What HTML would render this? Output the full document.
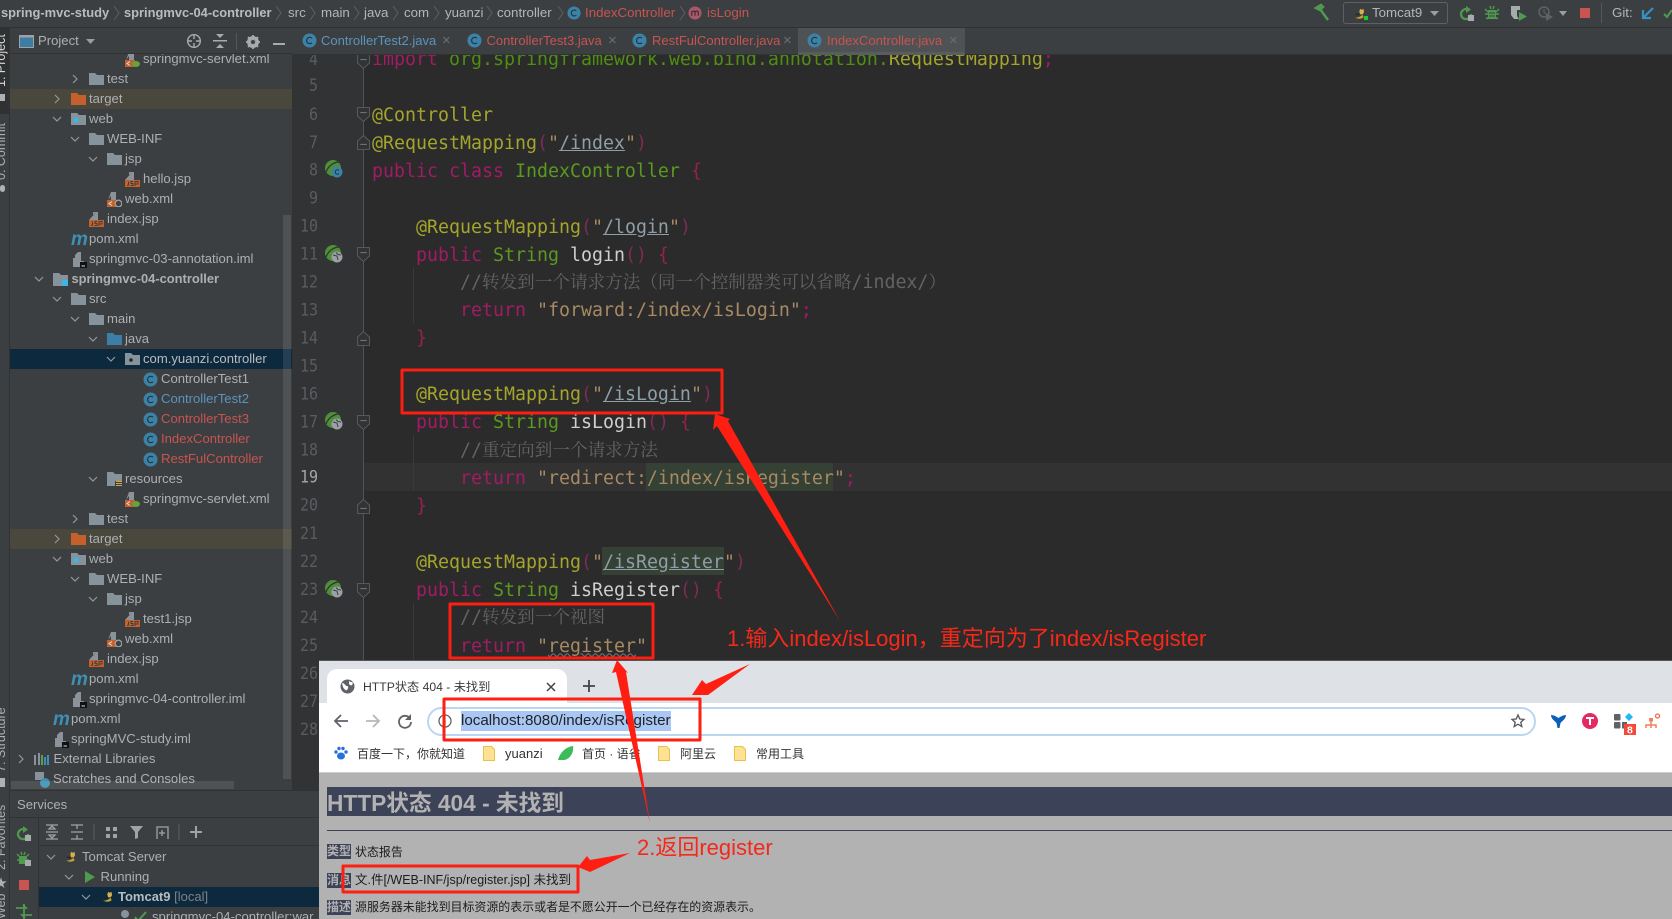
<!DOCTYPE html>
<html lang="zh"><head><meta charset="utf-8"><title>IntelliJ IDEA</title>
<style>
*{margin:0;padding:0;box-sizing:border-box}
html,body{width:1672px;height:919px;overflow:hidden;background:#2b2b2b}
body{position:relative;font-family:"Liberation Sans","Noto Sans CJK SC",sans-serif}
.a{position:absolute}
.ab{position:absolute;white-space:pre}
svg{position:absolute;overflow:visible}
/* top */
#top{left:0;top:0;width:1672px;height:28px;background:#3c3f41;border-bottom:1px solid #323232}
.bc{position:absolute;top:4px;height:18px;line-height:18px;font-size:13.3px;color:#b3b6b8;white-space:pre}
.bc.bd{font-weight:bold;color:#b9bcbe;font-size:12.9px}
.red{color:#c75450}
#tabs{left:292px;top:28px;width:1380px;height:26px;background:#3c3f41}
.tb{position:absolute;top:32px;height:18px;line-height:18px;font-size:13.05px;white-space:pre}
.x{position:absolute;top:32px;height:18px;line-height:18px;font-size:15px;color:#6c6f71}
/* tree */
#tree{left:0;top:0;width:1672px;height:919px;clip-path:inset(54px 1380px 129px 10px)}
.r{position:absolute;left:0;width:292px;height:20px}
.r span{position:absolute;top:0;line-height:20px;font-size:13.1px;color:#adb0b3;white-space:pre}
.r svg{top:3px}
.r b{font-weight:bold;font-size:12.9px}
/* code */
#code{left:372px;top:46px;font-family:"DejaVu Sans Mono","Noto Serif CJK SC",monospace;font-size:18.27px;color:#c8c8c8}
#code div{height:27.95px;line-height:27.95px;white-space:pre;overflow:visible}
#code div.c{position:relative;top:-1.5px}
#code i{font-style:normal;font-family:"Noto Serif CJK SC",serif;font-size:17.6px}
.k{color:#a31a65}.g{color:#5a9a20}.n{color:#a5a52c}.s{color:#a78a63}.u{color:#8e9fa8;text-decoration:underline}
.p{color:#7e2b55}.br{color:#96204f}.c{color:#636363}.w{color:#cfcfcf}.o{color:#4e8f12}
.wv{text-decoration:underline wavy #777 1px}
.ln{position:absolute;left:292px;width:26px;text-align:right;height:28px;line-height:28px;font:15px/28px "DejaVu Sans Mono",monospace;color:#5a5d60;transform:scaleY(1.15)}
/* browser */
#br{left:319px;top:660px;width:1353px;height:259px;background:#dee1e6;overflow:hidden;border-top:1px solid #555}
.bm{position:absolute;top:84px;height:18px;line-height:18px;font-size:12px;color:#333;white-space:pre}
.lab{position:absolute;left:8px;width:24px;height:15px;line-height:15px;background:#3c4257;color:#b2b2b2;font-size:12px;font-weight:bold;white-space:pre}
.txt{position:absolute;left:36px;height:16px;line-height:16px;font-size:11.95px;color:#1c1c1c;white-space:pre}
</style></head><body>
<svg width="0" height="0" style="position:absolute">
<defs>
<symbol id="fo" viewBox="0 0 15 14"><path d="M0 1h6l2 2h7v10H0z" fill="#87939b"/></symbol>
<symbol id="fr" viewBox="0 0 15 14"><path d="M0 1h6l2 2h7v10H0z" fill="#c4602c"/></symbol>
<symbol id="fj" viewBox="0 0 15 14"><path d="M0 1h6l2 2h7v10H0z" fill="#3c7fa6"/></symbol>
<symbol id="fw" viewBox="0 0 15 14"><path d="M0 1h6l2 2h7v10H0z" fill="#87939b"/><circle cx="5" cy="8" r="2.6" fill="#3fb4e6"/></symbol>
<symbol id="fp" viewBox="0 0 15 14"><path d="M0 1h6l2 2h7v10H0z" fill="#87939b"/><circle cx="6" cy="8" r="1.8" fill="#24282b"/></symbol>
<symbol id="fy" viewBox="0 0 15 14"><path d="M0 0h6l2 2h7v7H8v5H0z" fill="#87939b"/><path d="M9 9h6v1H9zM9 11h6v1H9zM9 13h6v1H9z" fill="#d9a343"/></symbol>
<symbol id="fm" viewBox="0 0 15 14"><path d="M0 1h6l2 2h7v5H9v6H0z" fill="#87939b"/><rect x="9" y="8" width="6" height="6" fill="#3fb4e6"/></symbol>
<symbol id="jsp" viewBox="0 0 15 15"><path d="M4 0h5v8H4zM0 8h4V4l3-4" fill="#8b9299"/><rect y="8" width="15" height="7" fill="#c4602c"/><path d="M3.5 9.5v3.5l-1.5.5M8 9.500H6v2h2v2H5.500M10 14V9.500h3v2.500h-3" stroke="#3c3f41" fill="none" stroke-width="1"/></symbol>
<symbol id="xl" viewBox="0 0 15 15"><path d="M4 0h5v8H4zM1 8l3-4V0" fill="#8b9299"/><rect y="8" width="10" height="7" fill="#c4602c"/><path d="M5 9.500l-3 2 3 2" stroke="#ddd" fill="none"/><ellipse cx="11" cy="12" rx="4" ry="3" fill="#63a53b"/></symbol>
<symbol id="xw" viewBox="0 0 15 15"><path d="M4 0h5v8H4zM1 8l3-4V0" fill="#8b9299"/><rect y="8" width="10" height="7" fill="#c4602c"/><path d="M5 9.500l-3 2 3 2" stroke="#ddd" fill="none"/><circle cx="11.500" cy="11.500" r="3.300" fill="#3c3f41" stroke="#9aa0a5" stroke-width="1.300"/></symbol>
<symbol id="cl" viewBox="0 0 15 15"><circle cx="7.500" cy="7.500" r="7" fill="#3c82a6"/><path d="M10 5.200a3.200 3.200 0 1 0 0 4.600" stroke="#23343f" fill="none" stroke-width="1.200"/></symbol>
<symbol id="ml" viewBox="0 0 15 15"><circle cx="7.500" cy="7.500" r="7" fill="#a8586a"/><path d="M4 10.500V5.500M4 6.500c1-1.500 3.500-1.500 3.500 0v4M7.500 6.500c1-1.500 3.500-1.500 3.500 0v4" stroke="#2f2a2c" fill="none" stroke-width="1.100"/></symbol>
<symbol id="iml" viewBox="0 0 15 16"><path d="M3 3l3-3h3v9h3v6H1V6h2z" fill="#8b9299"/><rect x="8" y="10" width="7" height="6" fill="#111"/><rect x="9.500" y="13.500" width="3.500" height="1" fill="#ddd"/></symbol>
<symbol id="cd" viewBox="0 0 10 10"><path d="M1 3l4 4 4-4" stroke="#95989b" stroke-width="1.200" fill="none"/></symbol>
<symbol id="cr" viewBox="0 0 10 10"><path d="M3 1l4 4-4 4" stroke="#95989b" stroke-width="1.200" fill="none"/></symbol>
<symbol id="sc" viewBox="0 0 8 14"><path d="M1 0l5 7-5 7" stroke="#5d6063" stroke-width="1" fill="none"/></symbol>
<symbol id="bean" viewBox="0 0 18 18"><circle cx="8" cy="8" r="8" fill="#4f8f3a"/><path d="M1 12C4 4 11 2 14 2" stroke="#2f3133" stroke-width="1.200" fill="none"/><circle cx="12" cy="12" r="5.500" fill="#3c82a6"/><path d="M14 10.500a2.200 2.200 0 1 0 0 3" stroke="#23343f" fill="none"/></symbol>
<symbol id="beanw" viewBox="0 0 18 18"><circle cx="8" cy="8" r="8" fill="#4f8f3a"/><path d="M1 12C4 4 11 2 14 2" stroke="#2f3133" stroke-width="1.200" fill="none"/><circle cx="12" cy="12" r="5.500" fill="#9ba1a6"/><path d="M8 10l4 1 1 4M11 7.500l2 2 3 .5" stroke="#3c3f41" fill="none"/></symbol>
<symbol id="fd" viewBox="0 0 14 16"><path d="M.5.500h13v9L7 15.500.5 9.500z" fill="#313335" stroke="#5a5d60"/><path d="M3.500 6h7" stroke="#7a7d80"/></symbol>
<symbol id="fu" viewBox="0 0 14 16"><path d="M.5 15.500h13v-9L7 .500.5 6.500z" fill="#313335" stroke="#5a5d60"/><path d="M3.500 10h7" stroke="#7a7d80"/></symbol>
<symbol id="tc" viewBox="0 0 16 14"><path d="M7 1l2 1 2-1 .5 4-1.500 2.500-3 0L6 4z" fill="#d8b04a"/><path d="M1 11c3 1 6-1 9-3l1 3c-3 2-7 2-10 0z" fill="#c7a136"/><path d="M2 7l4 1" stroke="#222" stroke-width="1.500"/></symbol>
</defs></svg>

<!-- editor background -->
<div class="a" style="left:292px;top:54px;width:72px;height:740px;background:#313335"></div>
<div class="a" style="left:363px;top:54px;width:1px;height:610px;background:#515355"></div>
<div class="a" style="left:364px;top:463px;width:1308px;height:28px;background:#323232"></div>
<div class="a" style="left:646px;top:463px;width:187px;height:28px;background:#344134"></div>
<div class="a" style="left:602px;top:547px;width:122px;height:28px;background:#344134"></div>
<div class="a" style="left:413px;top:267px;width:1px;height:56px;background:#3a3a3a"></div>
<div class="a" style="left:413px;top:435px;width:1px;height:56px;background:#3a3a3a"></div>
<div class="a" style="left:413px;top:603px;width:1px;height:57px;background:#3a3a3a"></div>

<!-- code -->
<div class="a" id="code">
<div><span class="k">import</span> <span class="o">org.springframework.web.bind.annotation.</span><span class="n">RequestMapping</span><span class="k">;</span></div>
<div> </div>
<div><span class="n">@Controller</span></div>
<div><span class="n">@RequestMapping</span><span class="p">(</span><span class="s">"</span><span class="u">/index</span><span class="s">"</span><span class="p">)</span></div>
<div><span class="k">public class</span> <span class="g">IndexController</span> <span class="br">{</span></div>
<div> </div>
<div>    <span class="n">@RequestMapping</span><span class="p">(</span><span class="s">"</span><span class="u">/login</span><span class="s">"</span><span class="p">)</span></div>
<div>    <span class="k">public</span> <span class="g">String</span> <span class="w">login</span><span class="p">()</span> <span class="br">{</span></div>
<div class="c">        //<i>转发到一个请求方法（同一个控制器类可以省略</i>/index/<i>）</i></div>
<div>        <span class="k">return</span> <span class="s">"forward:/index/isLogin"</span><span class="k">;</span></div>
<div>    <span class="br">}</span></div>
<div> </div>
<div>    <span class="n">@RequestMapping</span><span class="p">(</span><span class="s">"</span><span class="u">/isLogin</span><span class="s">"</span><span class="p">)</span></div>
<div>    <span class="k">public</span> <span class="g">String</span> <span class="w">isLogin</span><span class="p">()</span> <span class="br">{</span></div>
<div class="c">        //<i>重定向到一个请求方法</i></div>
<div>        <span class="k">return</span> <span class="s">"redirect:/index/isRegister"</span><span class="k">;</span></div>
<div>    <span class="br">}</span></div>
<div> </div>
<div>    <span class="n">@RequestMapping</span><span class="p">(</span><span class="s">"</span><span class="u">/isRegister</span><span class="s">"</span><span class="p">)</span></div>
<div>    <span class="k">public</span> <span class="g">String</span> <span class="w">isRegister</span><span class="p">()</span> <span class="br">{</span></div>
<div class="c">        //<i>转发到一个视图</i></div>
<div>        <span class="k">return</span> <span class="s">"<span class="wv">register</span>"</span></div>
</div>

<!-- line numbers -->
<div class="ln" style="top:45px">4</div><div class="ln" style="top:71px">5</div><div class="ln" style="top:100px">6</div><div class="ln" style="top:128px">7</div><div class="ln" style="top:156px">8</div><div class="ln" style="top:184px">9</div><div class="ln" style="top:212px">10</div><div class="ln" style="top:240px">11</div><div class="ln" style="top:268px">12</div><div class="ln" style="top:296px">13</div><div class="ln" style="top:324px">14</div><div class="ln" style="top:352px">15</div><div class="ln" style="top:380px">16</div><div class="ln" style="top:408px">17</div><div class="ln" style="top:436px">18</div><div class="ln" style="top:463px;color:#a4a6a8">19</div><div class="ln" style="top:491px">20</div><div class="ln" style="top:519px">21</div><div class="ln" style="top:547px">22</div><div class="ln" style="top:575px">23</div><div class="ln" style="top:603px">24</div><div class="ln" style="top:631px">25</div><div class="ln" style="top:659px">26</div><div class="ln" style="top:687px">27</div><div class="ln" style="top:715px">28</div>

<!-- gutter icons -->
<svg width="18" height="18" style="left:325px;top:160px"><use href="#bean"/></svg>
<svg width="18" height="18" style="left:325px;top:245px"><use href="#beanw"/></svg>
<svg width="18" height="18" style="left:325px;top:412px"><use href="#beanw"/></svg>
<svg width="18" height="18" style="left:325px;top:580px"><use href="#beanw"/></svg>
<svg width="13" height="15" style="left:357px;top:54px"><use href="#fd"/></svg>
<svg width="13" height="15" style="left:357px;top:107px"><use href="#fd"/></svg>
<svg width="13" height="15" style="left:357px;top:135px"><use href="#fu"/></svg>
<svg width="13" height="15" style="left:357px;top:247px"><use href="#fd"/></svg>
<svg width="13" height="15" style="left:357px;top:331px"><use href="#fu"/></svg>
<svg width="13" height="15" style="left:357px;top:415px"><use href="#fd"/></svg>
<svg width="13" height="15" style="left:357px;top:499px"><use href="#fu"/></svg>
<svg width="13" height="15" style="left:357px;top:583px"><use href="#fd"/></svg>

<!-- project panel -->
<div class="a" style="left:10px;top:28px;width:282px;height:762px;background:#3c3f41"></div>
<div class="a" style="left:292px;top:28px;width:1px;height:762px;background:#323232"></div>
<div class="a" style="left:10px;top:89px;width:282px;height:20px;background:#4a473d"></div>
<div class="a" style="left:10px;top:349px;width:282px;height:20px;background:#0d293e"></div>
<div class="a" style="left:10px;top:529px;width:282px;height:20px;background:#4a473d"></div>

<div class="a" id="tree">
<div class="r" style="top:49px"><svg width="15" height="15" style="left:125px"><use href="#xl"/></svg><span style="left:143px">springmvc-servlet.xml</span></div>
<div class="r" style="top:69px"><svg width="10" height="10" style="left:70px;top:5px"><use href="#cr"/></svg><svg width="15" height="14" style="left:89px"><use href="#fo"/></svg><span style="left:107px">test</span></div>
<div class="r" style="top:89px"><svg width="10" height="10" style="left:52px;top:5px"><use href="#cr"/></svg><svg width="15" height="14" style="left:71px"><use href="#fr"/></svg><span style="left:89px">target</span></div>
<div class="r" style="top:109px"><svg width="10" height="10" style="left:52px;top:5px"><use href="#cd"/></svg><svg width="15" height="14" style="left:71px"><use href="#fw"/></svg><span style="left:89px">web</span></div>
<div class="r" style="top:129px"><svg width="10" height="10" style="left:70px;top:5px"><use href="#cd"/></svg><svg width="15" height="14" style="left:89px"><use href="#fo"/></svg><span style="left:107px">WEB-INF</span></div>
<div class="r" style="top:149px"><svg width="10" height="10" style="left:88px;top:5px"><use href="#cd"/></svg><svg width="15" height="14" style="left:107px"><use href="#fo"/></svg><span style="left:125px">jsp</span></div>
<div class="r" style="top:169px"><svg width="15" height="15" style="left:125px"><use href="#jsp"/></svg><span style="left:143px">hello.jsp</span></div>
<div class="r" style="top:189px"><svg width="15" height="15" style="left:107px"><use href="#xw"/></svg><span style="left:125px">web.xml</span></div>
<div class="r" style="top:209px"><svg width="15" height="15" style="left:89px"><use href="#jsp"/></svg><span style="left:107px">index.jsp</span></div>
<div class="r" style="top:229px"><svg width="16" height="15" style="left:71px"><text x="0" y="13" font-family="Liberation Sans" font-weight="bold" font-style="italic" font-size="19" fill="#3d8fb3">m</text></svg><span style="left:89px">pom.xml</span></div>
<div class="r" style="top:249px"><svg width="15" height="16" style="left:72px"><use href="#iml"/></svg><span style="left:89px">springmvc-03-annotation.iml</span></div>
<div class="r" style="top:269px"><svg width="10" height="10" style="left:34px;top:5px"><use href="#cd"/></svg><svg width="15" height="14" style="left:53px"><use href="#fm"/></svg><span style="left:71.500px"><b>springmvc-04-controller</b></span></div>
<div class="r" style="top:289px"><svg width="10" height="10" style="left:52px;top:5px"><use href="#cd"/></svg><svg width="15" height="14" style="left:71px"><use href="#fo"/></svg><span style="left:89px">src</span></div>
<div class="r" style="top:309px"><svg width="10" height="10" style="left:70px;top:5px"><use href="#cd"/></svg><svg width="15" height="14" style="left:89px"><use href="#fo"/></svg><span style="left:107px">main</span></div>
<div class="r" style="top:329px"><svg width="10" height="10" style="left:88px;top:5px"><use href="#cd"/></svg><svg width="15" height="14" style="left:107px"><use href="#fj"/></svg><span style="left:125px">java</span></div>
<div class="r" style="top:349px"><svg width="10" height="10" style="left:106px;top:5px"><use href="#cd"/></svg><svg width="15" height="14" style="left:125px"><use href="#fp"/></svg><span style="left:143px;color:#b9bcbe">com.yuanzi.controller</span></div>
<div class="r" style="top:369px"><svg width="15" height="15" style="left:143px"><use href="#cl"/></svg><span style="left:161px">ControllerTest1</span></div>
<div class="r" style="top:389px"><svg width="15" height="15" style="left:143px"><use href="#cl"/></svg><span style="left:161px;color:#5b93bd">ControllerTest2</span></div>
<div class="r" style="top:409px"><svg width="15" height="15" style="left:143px"><use href="#cl"/></svg><span style="left:161px;color:#c75450">ControllerTest3</span></div>
<div class="r" style="top:429px"><svg width="15" height="15" style="left:143px"><use href="#cl"/></svg><span style="left:161px;color:#c75450">IndexController</span></div>
<div class="r" style="top:449px"><svg width="15" height="15" style="left:143px"><use href="#cl"/></svg><span style="left:161px;color:#c75450">RestFulController</span></div>
<div class="r" style="top:469px"><svg width="10" height="10" style="left:88px;top:5px"><use href="#cd"/></svg><svg width="15" height="14" style="left:107px"><use href="#fy"/></svg><span style="left:125px">resources</span></div>
<div class="r" style="top:489px"><svg width="15" height="15" style="left:125px"><use href="#xl"/></svg><span style="left:143px">springmvc-servlet.xml</span></div>
<div class="r" style="top:509px"><svg width="10" height="10" style="left:70px;top:5px"><use href="#cr"/></svg><svg width="15" height="14" style="left:89px"><use href="#fo"/></svg><span style="left:107px">test</span></div>
<div class="r" style="top:529px"><svg width="10" height="10" style="left:52px;top:5px"><use href="#cr"/></svg><svg width="15" height="14" style="left:71px"><use href="#fr"/></svg><span style="left:89px">target</span></div>
<div class="r" style="top:549px"><svg width="10" height="10" style="left:52px;top:5px"><use href="#cd"/></svg><svg width="15" height="14" style="left:71px"><use href="#fw"/></svg><span style="left:89px">web</span></div>
<div class="r" style="top:569px"><svg width="10" height="10" style="left:70px;top:5px"><use href="#cd"/></svg><svg width="15" height="14" style="left:89px"><use href="#fo"/></svg><span style="left:107px">WEB-INF</span></div>
<div class="r" style="top:589px"><svg width="10" height="10" style="left:88px;top:5px"><use href="#cd"/></svg><svg width="15" height="14" style="left:107px"><use href="#fo"/></svg><span style="left:125px">jsp</span></div>
<div class="r" style="top:609px"><svg width="15" height="15" style="left:125px"><use href="#jsp"/></svg><span style="left:143px">test1.jsp</span></div>
<div class="r" style="top:629px"><svg width="15" height="15" style="left:107px"><use href="#xw"/></svg><span style="left:125px">web.xml</span></div>
<div class="r" style="top:649px"><svg width="15" height="15" style="left:89px"><use href="#jsp"/></svg><span style="left:107px">index.jsp</span></div>
<div class="r" style="top:669px"><svg width="16" height="15" style="left:71px"><text x="0" y="13" font-family="Liberation Sans" font-weight="bold" font-style="italic" font-size="19" fill="#3d8fb3">m</text></svg><span style="left:89px">pom.xml</span></div>
<div class="r" style="top:689px"><svg width="15" height="16" style="left:72px"><use href="#iml"/></svg><span style="left:89px">springmvc-04-controller.iml</span></div>
<div class="r" style="top:709px"><svg width="16" height="15" style="left:53px"><text x="0" y="13" font-family="Liberation Sans" font-weight="bold" font-style="italic" font-size="19" fill="#3d8fb3">m</text></svg><span style="left:71px">pom.xml</span></div>
<div class="r" style="top:729px"><svg width="15" height="16" style="left:54px"><use href="#iml"/></svg><span style="left:71px">springMVC-study.iml</span></div>
<div class="r" style="top:749px"><svg width="10" height="10" style="left:16px;top:5px"><use href="#cr"/></svg><svg width="14" height="12" style="left:35px;top:4px"><path d="M0 2v10M4 0v12" stroke="#87939b" stroke-width="2"/><path d="M7 2v10" stroke="#5f9d4d" stroke-width="2"/><path d="M10 4v8M13 2v10" stroke="#3d8fb3" stroke-width="2"/></svg><span style="left:53.500px">External Libraries</span></div>
<div class="r" style="top:769px"><svg width="16" height="16" style="left:35px"><rect width="9" height="8" fill="#87939b"/><circle cx="10" cy="11" r="5" fill="#3d8fb3"/></svg><span style="left:53px">Scratches and Consoles</span></div>
</div>
<div class="a" style="left:283px;top:215px;width:8px;height:564px;background:rgba(255,255,255,.1)"></div>
<div class="a" style="left:11px;top:781px;width:223px;height:8px;background:rgba(255,255,255,.1)"></div>

<!-- left strip -->
<div class="a" style="left:0;top:0;width:10px;height:919px;background:#3c3f41;overflow:hidden;border-right:1px solid #323232">
<div class="a" style="left:0;top:28px;width:10px;height:86px;background:#2f3133"></div>
<div class="ab" style="left:-6px;top:87px;font-size:12.500px;line-height:14px;color:#d8d8d8;transform-origin:0 0;transform:rotate(-90deg)">1: Project</div>
<div class="a" style="left:0;top:94px;width:5px;height:7px;background:#aeb0b2"></div>
<div class="ab" style="left:-6px;top:180px;font-size:12.500px;line-height:14px;color:#adb0b3;transform-origin:0 0;transform:rotate(-90deg)">0: Commit</div>
<div class="a" style="left:0;top:185px;width:5px;height:7px;background:#aeb0b2;border-radius:3px"></div>
<div class="ab" style="left:-6px;top:772px;font-size:12.500px;line-height:14px;color:#adb0b3;transform-origin:0 0;transform:rotate(-90deg)">7: Structure</div>
<div class="a" style="left:0;top:778px;width:5px;height:9px;background:#aeb0b2"></div>
<div class="ab" style="left:-6px;top:870px;font-size:12.500px;line-height:14px;color:#adb0b3;transform-origin:0 0;transform:rotate(-90deg)">2: Favorites</div>
<div class="ab" style="left:-5px;top:874px;font-size:12px;color:#aeb0b2">★</div>
<div class="ab" style="left:-6px;top:919px;font-size:12.500px;line-height:14px;color:#adb0b3;transform-origin:0 0;transform:rotate(-90deg)">Web</div>
</div>

<!-- services -->
<div class="a" style="left:10px;top:790px;width:309px;height:129px;background:#3c3f41;border-top:1px solid #323232"></div>
<div class="a" style="left:10px;top:817px;width:309px;height:1px;background:#323232"></div>
<div class="a" style="left:38px;top:845px;width:281px;height:1px;background:#323232"></div>
<div class="a" style="left:38px;top:818px;width:1px;height:101px;background:#323232"></div>
<div class="ab" style="left:17px;top:796px;font-size:13.100px;line-height:18px;color:#adb0b3">Services</div>
<svg width="16" height="16" style="left:16px;top:826px"><path d="M12 8a5 5 0 1 1-3-4.500" stroke="#4f9a4f" stroke-width="2.200" fill="none"/><path d="M7 0l5 3.500-5 3.500z" fill="#4f9a4f"/><rect x="9" y="9" width="6" height="6" fill="#a8abad"/></svg>
<svg width="16" height="16" style="left:16px;top:851px"><path d="M3 5h8v8H3z" fill="#4f9a4f"/><path d="M1 3l3 3M13 3l-3 3M1 9h3M10 9h3M5 1l1 3M9 1l-1 3" stroke="#4f9a4f" stroke-width="1.400"/><rect x="9" y="9" width="6" height="6" fill="#a8abad"/></svg>
<div class="a" style="left:19px;top:880px;width:10px;height:10px;background:#c75450"></div>
<svg width="16" height="16" style="left:16px;top:904px"><path d="M8 0v16M0 4h10l-3-3M16 11H6l3 3" stroke="#4f9a4f" stroke-width="1.800" fill="none"/></svg>
<svg width="200" height="16" style="left:45px;top:824px" fill="none" stroke="#a0a3a5" stroke-width="1.300"><path d="M1 1h12M1 15h12M1 8h12M7 2l-3 3h6zM7 14l-3-3h6z"/><path d="M26 1h12M26 15h12M26 8h12M32 1v4M32 11v4"/><path d="M49 0v16M134 0v16" stroke="#55585a"/><path d="M61 3h4v4h-4zM68 3h4v4h-4zM61 10h4v4h-4zM68 10h4v4h-4z" fill="#a0a3a5" stroke="none"/><path d="M85 2h13l-5 6v6l-3 1V8z" fill="#a0a3a5" stroke="none"/><path d="M112 15V3h11v12M117 6v6M114 9h6"/><path d="M151 2v12M145 8h12" stroke-width="2"/></svg>
<div class="a" style="left:39px;top:887px;width:280px;height:20px;background:#0d293e"></div>
<svg width="10" height="10" style="left:46px;top:852px"><use href="#cd"/></svg>
<svg width="14" height="12" style="left:65px;top:851px"><use href="#tc"/></svg>
<div class="ab" style="left:82px;top:848px;font-size:13.100px;line-height:18px;color:#adb0b3">Tomcat Server</div>
<svg width="10" height="10" style="left:64px;top:872px"><use href="#cd"/></svg>
<svg width="12" height="12" style="left:84px;top:871px"><path d="M1 0l10 6-10 6z" fill="#4f9a4f"/></svg>
<div class="ab" style="left:100.500px;top:868px;font-size:13.100px;line-height:18px;color:#adb0b3">Running</div>
<svg width="10" height="10" style="left:81px;top:892px"><use href="#cd"/></svg>
<svg width="14" height="12" style="left:102px;top:891px"><use href="#tc"/></svg>
<div class="ab" style="left:118px;top:888px;font-size:13px;line-height:18px;color:#b9bcbe"><b>Tomcat9</b> <span style="color:#7f8385">[local]</span></div>
<div class="a" style="left:118px;top:909px;width:201px;height:10px;overflow:hidden"><svg width="14" height="12" style="left:0;top:0"><circle cx="7" cy="5" r="4" fill="#87939b"/></svg><svg width="14" height="12" style="left:16px;top:2px"><path d="M1 6l3 4 8-9" stroke="#4f9a4f" stroke-width="2" fill="none"/></svg><div class="ab" style="left:34px;top:-1px;font-size:13.100px;line-height:18px;color:#adb0b3">springmvc-04-controller:war</div></div>

<!-- tab bar -->
<div class="a" id="tabs"></div>
<div class="a" style="left:292px;top:54px;width:1380px;height:1px;background:#323232"></div>
<div class="a" style="left:798px;top:28px;width:167px;height:27px;background:#4e5254;border-bottom:3px solid #5a5d5f"></div>
<svg width="15" height="15" style="left:302px;top:33px"><use href="#cl"/></svg><div class="tb" style="left:321px;color:#5b93bd">ControllerTest2.java</div><div class="x" style="left:442px">×</div>
<svg width="15" height="15" style="left:467px;top:33px"><use href="#cl"/></svg><div class="tb red" style="left:486.500px">ControllerTest3.java</div><div class="x" style="left:608px">×</div>
<svg width="15" height="15" style="left:632px;top:33px"><use href="#cl"/></svg><div class="tb red" style="left:652px">RestFulController.java</div><div class="x" style="left:783px">×</div>
<svg width="15" height="15" style="left:807px;top:33px"><use href="#cl"/></svg><div class="tb red" style="left:827px">IndexController.java</div><div class="x" style="left:949px">×</div>

<!-- project header -->
<div class="a" style="left:10px;top:28px;width:282px;height:26px;background:#3c3f41;border-bottom:1px solid #323232"></div>
<svg width="15" height="13" style="left:18.500px;top:35px"><rect x=".5" y=".5" width="14" height="12" fill="#3d7da3" stroke="#a0a3a5"/><rect x=".5" y=".5" width="14" height="2" fill="#a0a3a5"/></svg>
<div class="ab" style="left:38px;top:32px;font-size:13.100px;line-height:18px;color:#adb0b3">Project</div>
<svg width="10" height="6" style="left:86px;top:39px"><path d="M0 0h9l-4.500 5z" fill="#9a9da0"/></svg>
<svg width="16" height="16" style="left:186px;top:33px" fill="none" stroke="#a8abad" stroke-width="1.400"><circle cx="8" cy="8" r="6.300"/><path d="M8 1v5M8 10v5M1 8h5M10 8h5"/></svg>
<svg width="14" height="14" style="left:213px;top:34px" fill="#a8abad"><rect y="6" width="14" height="1.500"/><path d="M3 0h8l-4 4zM3 14h8l-4-4z"/></svg>
<div class="a" style="left:236px;top:33px;width:1px;height:17px;background:#55585a"></div>
<svg width="14" height="14" style="left:246px;top:35px"><circle cx="7" cy="7" r="4.500" fill="none" stroke="#a8abad" stroke-width="3"/><path d="M7 0v14M0 7h14M2 2l10 10M12 2L2 12" stroke="#a8abad" stroke-width="1.800"/><circle cx="7" cy="7" r="2" fill="#3c3f41"/></svg>
<div class="a" style="left:273px;top:43px;width:12px;height:2px;background:#a8abad"></div>

<!-- top bar -->
<div class="a" id="top"></div>
<div class="bc bd" style="left:1px">spring-mvc-study</div>
<svg width="8" height="14" style="left:113px;top:6px"><use href="#sc"/></svg>
<div class="bc bd" style="left:124px">springmvc-04-controller</div>
<svg width="8" height="14" style="left:275px;top:6px"><use href="#sc"/></svg>
<div class="bc" style="left:288px">src</div>
<svg width="8" height="14" style="left:309px;top:6px"><use href="#sc"/></svg>
<div class="bc" style="left:321px">main</div>
<svg width="8" height="14" style="left:353px;top:6px"><use href="#sc"/></svg>
<div class="bc" style="left:364px">java</div>
<svg width="8" height="14" style="left:392px;top:6px"><use href="#sc"/></svg>
<div class="bc" style="left:404px">com</div>
<svg width="8" height="14" style="left:433px;top:6px"><use href="#sc"/></svg>
<div class="bc" style="left:445px">yuanzi</div>
<svg width="8" height="14" style="left:486px;top:6px"><use href="#sc"/></svg>
<div class="bc" style="left:497px">controller</div>
<svg width="8" height="14" style="left:557px;top:6px"><use href="#sc"/></svg>
<svg width="14" height="14" style="left:567px;top:6px"><use href="#cl"/></svg>
<div class="bc red" style="left:585px">IndexController</div>
<svg width="8" height="14" style="left:679px;top:6px"><use href="#sc"/></svg>
<svg width="14" height="14" style="left:688px;top:6px"><use href="#ml"/></svg>
<div class="bc red" style="left:707px">isLogin</div>

<svg width="16" height="16" style="left:1315px;top:5px"><path d="M1 3l5-3 2 2-3 3zM5 4l8 11" stroke="#4f9a4f" stroke-width="2.500" fill="#4f9a4f"/></svg>
<div class="a" style="left:1343px;top:2px;width:105px;height:22px;border:1px solid #5e6163;border-radius:3px"></div>
<svg width="14" height="12" style="left:1354px;top:8px"><use href="#tc"/></svg>
<div class="a" style="left:1364px;top:16px;width:4px;height:4px;background:#1ecb2e"></div>
<div class="bc" style="left:1372px">Tomcat9</div>
<svg width="9" height="6" style="left:1430px;top:11px"><path d="M0 0h9L4.500 5z" fill="#9a9da0"/></svg>
<svg width="16" height="16" style="left:1459px;top:6px"><path d="M12 8a5 5 0 1 1-3-4.500" stroke="#4f9a4f" stroke-width="2.200" fill="none"/><path d="M7 0l5 3.500-5 3.500z" fill="#4f9a4f"/><rect x="9" y="9" width="6" height="6" fill="#a8abad"/></svg>
<svg width="14" height="14" style="left:1485px;top:6px"><path d="M3 4h8v9H3z" fill="#4f9a4f"/><path d="M0 3l3 3M14 3l-3 3M0 8h3M11 8h3M1 13l3-2M13 13l-3-2M5 0l1 3M9 0l-1 3" stroke="#4f9a4f" stroke-width="1.400"/><path d="M4 7h6M4 10h6" stroke="#3c3f41"/></svg>
<svg width="16" height="16" style="left:1511px;top:6px"><path d="M0 0h9v4H6v6l2 3H3L0 9z" fill="#a8abad"/><path d="M8 6l8 4.500L8 15z" fill="#4f9a4f"/></svg>
<svg width="15" height="15" style="left:1538px;top:6px"><circle cx="6" cy="6" r="5" fill="none" stroke="#5f6163" stroke-width="1.500"/><path d="M6 3v3l2 2" stroke="#5f6163" fill="none"/><path d="M8 7l7 4-7 4z" fill="#5f6163"/></svg>
<svg width="8" height="5" style="left:1559px;top:11px"><path d="M0 0h8L4 5z" fill="#9a9da0"/></svg>
<div class="a" style="left:1580px;top:8px;width:10px;height:10px;background:#c75450"></div>
<div class="a" style="left:1601px;top:3px;width:1px;height:20px;background:#55585a"></div>
<div class="bc" style="left:1612px">Git:</div>
<svg width="12" height="12" style="left:1642px;top:7px"><path d="M11 1L2 10M1 3v8h8" stroke="#3592c4" stroke-width="2.200" fill="none"/></svg>
<svg width="10" height="10" style="left:1664px;top:9px"><path d="M0 5l3 3 5-7" stroke="#4f9a4f" stroke-width="2" fill="none"/></svg>

<!-- browser -->
<div class="a" id="br">
<div class="a" style="left:8px;top:8px;width:240px;height:36px;background:#fff;border-radius:10px 10px 0 0"></div>
<div class="a" style="left:0;top:42px;width:1353px;height:69px;background:#fff"></div>
<svg width="15" height="15" style="left:21px;top:18px"><circle cx="7.500" cy="7.500" r="7" fill="#5f6368"/><path d="M2 4c3 0 3 3 5 3s1 3 0 4-3-1-4-3zM9 1c0 2 2 2 3 2s1 2 0 3-2 0-3-1z" fill="#fff"/></svg>
<div class="ab" style="left:44px;top:16px;font-size:12.200px;line-height:20px;color:#3a3a3a">HTTP状态 404 - 未找到</div>
<svg width="10" height="10" style="left:227px;top:21px"><path d="M1 1l8 8M9 1L1 9" stroke="#444" stroke-width="1.500"/></svg>
<svg width="12" height="12" style="left:264px;top:19px"><path d="M6 0v12M0 6h12" stroke="#444" stroke-width="1.800"/></svg>
<svg width="14" height="14" style="left:15px;top:53px"><path d="M14 7H2M7 1L1 7l6 6" stroke="#5f6368" stroke-width="1.800" fill="none"/></svg>
<svg width="14" height="14" style="left:47px;top:53px"><path d="M0 7h12M7 1l6 6-6 6" stroke="#b5b8bb" stroke-width="1.800" fill="none"/></svg>
<svg width="14" height="14" style="left:79px;top:53px"><path d="M12 4.500A6 6 0 1 0 13 8" stroke="#5f6368" stroke-width="1.800" fill="none"/><path d="M13 0v6H7z" fill="#5f6368"/></svg>
<div class="a" style="left:108px;top:46px;width:1109px;height:29px;border:2px solid #b9d6f4;border-radius:15px;background:#fff"></div>
<svg width="14" height="14" style="left:119px;top:53px"><circle cx="7" cy="7" r="6" fill="none" stroke="#5f6368" stroke-width="1.300"/><path d="M7 6v4.500M7 3.500v1.300" stroke="#5f6368" stroke-width="1.300"/></svg>
<div class="a" style="left:142px;top:50px;width:210px;height:20px;background:#a8c7f5"></div>
<div class="ab" style="left:142px;top:50px;font-size:15.150px;line-height:20px;color:#222">localhost:8080/index/isRegister</div>
<svg width="14" height="14" style="left:1192px;top:53px"><path d="M7 1l1.800 4 4.200.4-3.200 2.800 1 4.300L7 10.200 3.200 12.500l1-4.300L1 5.400 5.200 5z" fill="none" stroke="#555" stroke-width="1.300"/></svg>
<svg width="15" height="14" style="left:1232px;top:53px"><path d="M0 1c3 0 6 2 7.500 3C9 3 12 1 15 1c0 4-4 6-5.500 8L8.500 14h-2L5.500 9C4 7 0 5 0 1z" fill="#0c5fb8"/></svg>
<svg width="16" height="16" style="left:1263px;top:52px"><circle cx="8" cy="8" r="8" fill="#e42a63"/><path d="M4 5h8M8 5v7" stroke="#fff" stroke-width="2"/></svg>
<svg width="22" height="22" style="left:1295px;top:52px"><rect width="6.500" height="6.500" y="1" rx="1" fill="#5f6368"/><rect width="6.500" height="6.500" y="9" rx="1" fill="#5f6368"/><rect x="8" y="9" width="5" height="6.500" fill="#5f6368"/><path d="M11 4l4-4 4 4-4 4z" fill="#22b8f5"/><rect x="10" y="11" width="12" height="11" fill="#f24a3d"/><text x="13" y="20.500" font-size="10.500" font-family="Liberation Sans" font-weight="bold" fill="#fff">8</text></svg>
<svg width="16" height="17" style="left:1326px;top:52px"><circle cx="12.500" cy="3" r="2" fill="none" stroke="#f46b45" stroke-width="1.300"/><rect x="4" y="5" width="4" height="3.500" fill="#f08060"/><path d="M6 8.500v2M1 15v-3h10v3M6 10v5" stroke="#f08060" stroke-width="1.500" fill="none"/></svg>

<svg width="14" height="14" style="left:15px;top:85px" fill="#2a6fe0"><ellipse cx="7" cy="10" rx="4" ry="3.500"/><circle cx="2" cy="6" r="1.700"/><circle cx="5" cy="2.500" r="1.700"/><circle cx="9" cy="2.500" r="1.700"/><circle cx="12" cy="6" r="1.700"/></svg>
<div class="bm" style="left:38px">百度一下，你就知道</div>
<svg width="12" height="15" style="left:164px;top:85px"><path d="M.5.500h8l3 3v11H.5z" fill="#fde293" stroke="#eac14e"/></svg>
<div class="bm" style="left:186px;font-size:13px">yuanzi</div>
<svg width="16" height="15" style="left:239px;top:85px"><path d="M0 14C2 6 8 1 15 0c1 5-2 13-9 14-2 0-4 0-6 0z" fill="#3cbb5a"/></svg>
<div class="bm" style="left:263px">首页 · 语雀</div>
<svg width="12" height="15" style="left:339px;top:85px"><path d="M.5.500h8l3 3v11H.5z" fill="#fde293" stroke="#eac14e"/></svg>
<div class="bm" style="left:361px">阿里云</div>
<svg width="12" height="15" style="left:415px;top:85px"><path d="M.5.500h8l3 3v11H.5z" fill="#fde293" stroke="#eac14e"/></svg>
<div class="bm" style="left:437px">常用工具</div>

<div class="a" style="left:0;top:111px;width:1353px;height:148px;background:#b2b2b2;border-top:1px solid #cfcfcf"></div>
<div class="a" style="left:8px;top:126px;width:1345px;height:29px;background:#3c4257"></div>
<div class="ab" style="left:8px;top:128px;font-size:22.700px;font-weight:bold;line-height:29px;color:#b2b2b2;height:27px;overflow:hidden">HTTP状态 404 - 未找到</div>
<div class="a" style="left:8px;top:169px;width:1345px;height:1px;background:#3c4257"></div>
<div class="lab" style="top:183px">类型</div><div class="txt" style="top:183px">状态报告</div>
<div class="lab" style="top:212px">消息</div><div class="txt" style="top:211px;font-size:12.500px">文.件[/WEB-INF/jsp/register.jsp] 未找到</div>
<div class="lab" style="top:239px">描述</div><div class="txt" style="top:238px">源服务器未能找到目标资源的表示或者是不愿公开一个已经存在的资源表示。</div>
</div>

<!-- annotations -->
<svg width="1672" height="919" style="left:0;top:0">
<g fill="none" stroke="#fe1f12" stroke-width="3" stroke-linejoin="round">
<rect x="402" y="370" width="320" height="43"/>
<rect x="450" y="604" width="203" height="54"/>
<rect x="444" y="699" width="256" height="41"/>
<rect x="343" y="866" width="235" height="26"/>
</g>
<g fill="#fe1f12">
<path d="M840 621L728 421 730 419 715 414 713 430 717 426z"/>
<path d="M750 664L708 695 692 695 702 680 706 684z"/>
<path d="M650 823L626 672 628 673 617 660 612 673 616 672z"/>
<path d="M630 853L590 872 578 867 587 856 590 860z"/>
</g>
<text x="727" y="646" font-family="Liberation Sans,Noto Sans CJK SC,sans-serif" font-size="22" fill="#f5281a">1.输入index/isLogin，重定向为了index/isRegister</text>
<text x="637" y="855" font-family="Liberation Sans,Noto Sans CJK SC,sans-serif" font-size="22" fill="#f5281a">2.返回register</text>
</svg>
</body></html>
